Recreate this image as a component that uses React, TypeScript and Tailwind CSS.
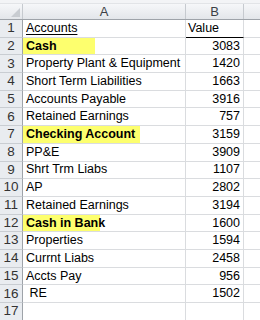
import React from "react";

type Row = { label: string; value?: string; hl?: string; bold?: boolean };

const ROWS: Row[] = [
  { label: "Accounts", value: "Value" },
  { label: "Cash", value: "3083", hl: "w-[72px]", bold: true },
  { label: "Property Plant & Equipment", value: "1420" },
  { label: "Short Term Liabilities", value: "1663" },
  { label: "Accounts Payable", value: "3916" },
  { label: "Retained Earnings", value: "757" },
  { label: "Checking Account", value: "3159", hl: "w-[117px]", bold: true },
  { label: "PP&E", value: "3909" },
  { label: "Shrt Trm Liabs", value: "1107" },
  { label: "AP", value: "2802" },
  { label: "Retained Earnings", value: "3194" },
  { label: "Cash in Bank", value: "1600", hl: "w-[77px]", bold: true },
  { label: "Properties", value: "1594" },
  { label: "Currnt Liabs", value: "2458" },
  { label: "Accts Pay", value: "956" },
  { label: " RE", value: "1502" },
  { label: "" },
];

export default function App() {
  return (
    <div
      className="w-[260px] h-[320px] overflow-hidden bg-white text-[12.5px] text-black"
      style={{ fontFamily: '"Liberation Sans", Arial, sans-serif' }}
    >
      {/* top strip */}
      <div className="h-[4px] bg-[#f3f4f6] border-b border-[#e2e4e7]" />

      {/* column headers */}
      <div className="flex h-[16px] bg-gradient-to-b from-[#f6f7f9] to-[#e3e6ea] border-b border-[#9ea3a9] text-[#3b3f45] text-[13px]">
        <div className="relative w-[23px] shrink-0 border-r border-[#c6cacf]">
          <div className="absolute right-[2px] bottom-[2px] w-0 h-0 border-l-[9px] border-l-transparent border-b-[9px] border-b-[#c8ccd1]" />
        </div>
        <div className="w-[163px] shrink-0 border-r border-[#c6cacf] flex items-center justify-center">A</div>
        <div className="w-[58px] shrink-0 border-r border-[#c6cacf] flex items-center justify-center">B</div>
        <div className="flex-1" />
      </div>

      {ROWS.map((r, i) => (
        <div key={i} className="flex h-[17.7px]">
          <div className="w-[23px] shrink-0 bg-[#e9ecf0] border-r border-[#9ea3a9] border-b border-b-[#c9cdd2] flex items-center justify-center text-[#333] text-[13.5px]">
            {i + 1}
          </div>
          <div className="relative w-[163px] shrink-0 border-r border-b border-[#dadcdf] flex items-center">
            {r.hl && <div className={`absolute left-0 top-0 bottom-0 ${r.hl} bg-[#fdff6e]`} />}
            <span
              className={`relative pl-[3px] whitespace-pre ${r.bold ? "font-bold" : ""} ${
                i === 0 ? "underline underline-offset-2" : ""
              }`}
            >
              {r.label}
            </span>
          </div>
          <div
            className={`w-[58px] shrink-0 border-r border-[#dadcdf] flex items-center pr-[3px] ${
              i === 0 ? "justify-start pl-[2px] border-b border-b-black" : "justify-end border-b"
            }`}
          >
            {r.value}
          </div>
          <div className="flex-1 border-b border-[#dadcdf]" />
        </div>
      ))}
    </div>
  );
}
